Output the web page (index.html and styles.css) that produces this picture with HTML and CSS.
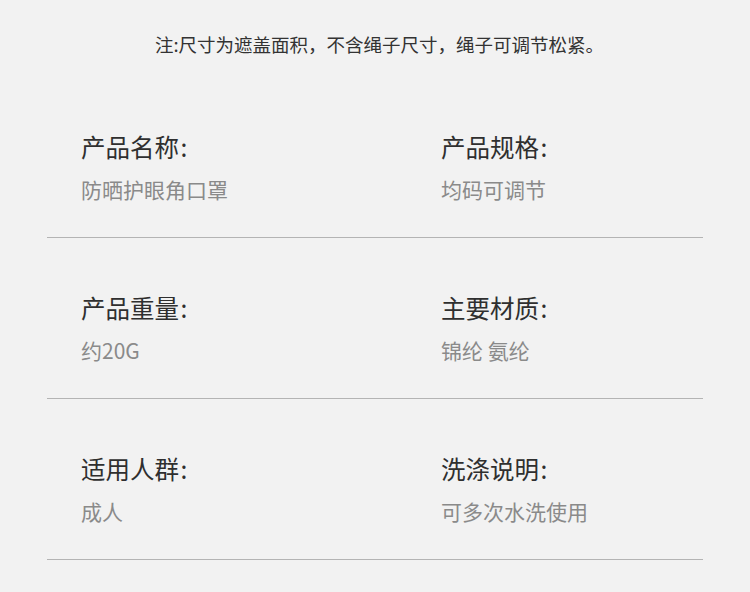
FILE: index.html
```html
<!DOCTYPE html>
<html lang="zh">
<head>
<meta charset="utf-8">
<link rel="stylesheet" href="styles.css">
</head>
<body>
<div class="page">
  <p class="note">注:尺寸为遮盖面积，不含绳子尺寸，绳子可调节松紧。</p>
  <div class="specs">
    <div class="row">
      <div class="cell"><div class="label">产品名称 :</div><div class="value">防晒护眼角口罩</div></div>
      <div class="cell"><div class="label">产品规格 :</div><div class="value">均码可调节</div></div>
    </div>
    <div class="row">
      <div class="cell"><div class="label">产品重量 :</div><div class="value">约20G</div></div>
      <div class="cell"><div class="label">主要材质 :</div><div class="value">锦纶 氨纶</div></div>
    </div>
    <div class="row">
      <div class="cell"><div class="label">适用人群 :</div><div class="value">成人</div></div>
      <div class="cell"><div class="label">洗涤说明 :</div><div class="value">可多次水洗使用</div></div>
    </div>
  </div>
</div>
</body>
</html>
```
FILE: styles.css
```css
html, body {
  margin: 0;
  padding: 0;
  background: #f2f2f2;
}
body {
  font-family: "Noto Sans CJK SC", "Noto Sans", sans-serif;
  width: 750px;
  height: 592px;
  overflow: hidden;
}
.page {
  padding: 0 47px;
}
.note {
  margin: 0;
  padding: 32px 0 21px 9px;
  font-size: 18.5px;
  line-height: 24px;
  color: #333;
  text-align: center;
}
.row {
  display: grid;
  grid-template-columns: 360px 1fr;
  padding: 55px 0 33px 34px;
  border-bottom: 1px solid #b4b4b4;
}
.label {
  font-size: 24.5px;
  line-height: 30px;
  color: #2f2f2f;
  word-spacing: -4px;
}
.value {
  margin-top: 12px;
  font-size: 21px;
  line-height: 30px;
  color: #8a8a8a;
}
```
